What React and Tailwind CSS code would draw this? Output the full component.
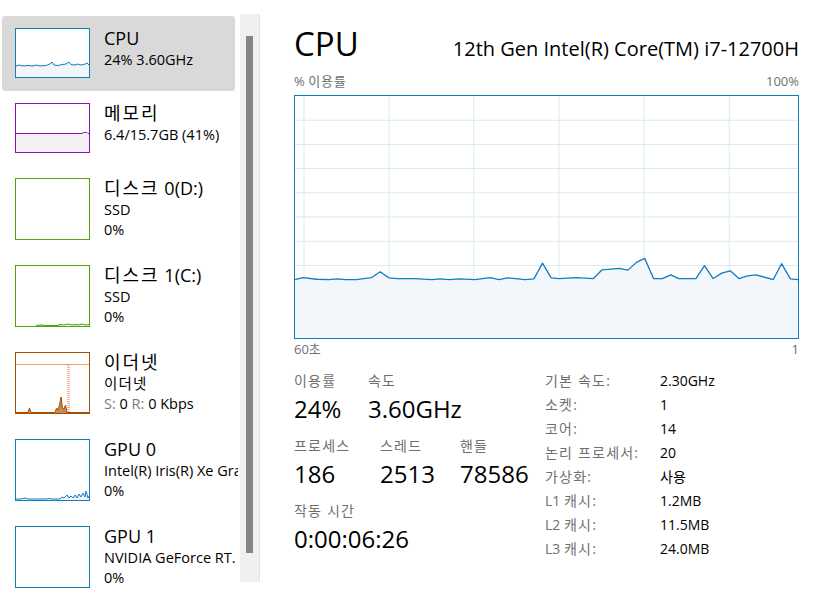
import React from "react";

const FONT = "font-['Open_Sans','Noto_Sans_CJK_KR',sans-serif]";

const chartPts = [
  [0, 182.8], [7.9, 180.8], [21.7, 182.5], [33.8, 182.8], [42.5, 182.1], [51.1, 182.8], [61.4, 182.8],
  [77, 180.8], [85.6, 175.1], [94.3, 181.1], [102.9, 181.8], [120.1, 181.8], [137.4, 182.8], [146, 182.1],
  [154.7, 182.8], [165, 182.1], [180.5, 182.8], [196.1, 180.8], [204.7, 182.8], [213.3, 181.1], [223.7, 182.1],
  [230.6, 182.8], [239.9, 182.1], [248.5, 166.4], [257.2, 181.1], [265.1, 181.8], [282.4, 180.8], [299.6, 181.8],
  [308.3, 173.1], [325.5, 171.7], [334.2, 173.4], [342.8, 165.7], [351.1, 161.7], [360, 181.8], [368.7, 181.8],
  [377.3, 178.1], [385.3, 181.8], [402.5, 181.8], [411.1, 169], [419.8, 181.8], [428.4, 176.4], [437, 174.1],
  [445.7, 181.8], [454.3, 179.1], [462.9, 178.1], [480.2, 182.8], [488.5, 167], [497.4, 182.1], [505, 182.8],
];

function MainChart() {
  const line = chartPts.map((p) => p.join(",")).join(" ");
  const area = `0,241 ${line} 505,241`;
  const vx = [9, 94.5, 179.5, 265, 350.5, 436];
  const hy = [1, 2, 3, 4, 5, 6, 7, 8, 9].map((k) => k * 24.1);
  return (
    <svg className="block w-full h-full" viewBox="0 0 505 241" preserveAspectRatio="none">
      {vx.map((x) => (
        <line key={"v" + x} x1={x} y1="0" x2={x} y2="241" stroke="#d9eaf4" strokeWidth="1" vectorEffect="non-scaling-stroke" />
      ))}
      {hy.map((y) => (
        <line key={"h" + y} x1="0" y1={y} x2="505" y2={y} stroke="#d9eaf4" strokeWidth="1" vectorEffect="non-scaling-stroke" />
      ))}
      <polygon points={area} fill="#f1f6fa" fillOpacity="0.85" />
      <polyline points={line} fill="none" stroke="#117dbb" strokeWidth="1.3" vectorEffect="non-scaling-stroke" strokeLinejoin="round" />
    </svg>
  );
}

function CpuThumb() {
  const pts = "0,37 3,36 7,37 12,36.5 17,37 20,36 24,37 30,36.5 34,35 36,33 38,36 42,36.5 46,35.5 50,35 53,33 55,35.5 58,36 62,35 64,36 68,35.5 71,34 73,36";
  return (
    <svg className="block w-full h-full" viewBox="0 0 73 48" preserveAspectRatio="none">
      <polygon points={`0,48 ${pts} 73,48`} fill="#f1f6fa" />
      <polyline points={pts} fill="none" stroke="#117dbb" strokeWidth="1" />
    </svg>
  );
}

function MemThumb() {
  const pts = "0,29.5 66,29.5 67.5,28.5 71,28.5 72,29.5 73,29.5";
  return (
    <svg className="block w-full h-full" viewBox="0 0 73 48" preserveAspectRatio="none">
      <polygon points={`0,48 ${pts} 73,48`} fill="#f4f1f5" />
      <polyline points={pts} fill="none" stroke="#8b12ae" strokeWidth="1" />
    </svg>
  );
}

function Disk1Thumb() {
  const pts = "20,59.5 26,59 30,59.5 42,59.5 44,58.5 48,59 52,58 56,59 60,58.5 63,59 66,58 70,59 73,58.5";
  return (
    <svg className="block w-full h-full" viewBox="0 0 73 60" preserveAspectRatio="none">
      <polyline points={pts} fill="none" stroke="#4da60c" strokeWidth="1.2" />
    </svg>
  );
}

function EthThumb() {
  const pts = "0,59.5 12,59.5 13.5,55 15,59.5 39,59.5 40.5,55 42,57 43.5,52 45,44 46.5,55 48,56 49.5,52 51,59.5 73,59.5";
  return (
    <svg className="block w-full h-full" viewBox="0 0 73 60" preserveAspectRatio="none">
      <line x1="0" y1="11.5" x2="73" y2="11.5" stroke="#e3a36a" strokeWidth="1" />
      <polygon points={`0,60 ${pts} 73,60`} fill="#c98a55" />
      <polyline points={pts} fill="none" stroke="#a74f01" strokeWidth="1" />
      <line x1="52" y1="12" x2="52" y2="59" stroke="#e8703a" strokeWidth="1" strokeDasharray="1 1" />
      <line x1="53.2" y1="14" x2="53.2" y2="59" stroke="#e8703a" strokeWidth="0.8" strokeDasharray="1 1" />
    </svg>
  );
}

function Gpu0Thumb() {
  const pts = "0,59 5,59 9,58 12,59 30,59 33,58.5 36,59 44,59 46,57 48,58 51,55 53,58 55,56 57,58 59,55 61,58 63,54 65,57 67,53 69,57 70,51 72,58 73,56";
  return (
    <svg className="block w-full h-full" viewBox="0 0 73 60" preserveAspectRatio="none">
      <polygon points={`0,60 ${pts} 73,60`} fill="#f1f6fa" />
      <polyline points={pts} fill="none" stroke="#117dbb" strokeWidth="1" />
    </svg>
  );
}

function SideItem({ selected, thumbClass, thumb, title, lines }) {
  return (
    <div className={`flex w-[233px] pl-[13px] pt-[12px] pb-[13px] rounded-[3px] ${selected ? "bg-[#d9d9d9]" : ""}`}>
      <div className={`w-[75px] shrink-0 border ${thumbClass} bg-white`}>{thumb}</div>
      <div className="ml-[14px] -mt-[2px] flex flex-col whitespace-nowrap text-black">
        <div className="text-[18px] leading-[24px]">{title}</div>
        {lines.map((l, i) => (
          <div key={i} className="text-[14.5px] leading-[20px]">
            {l}
          </div>
        ))}
      </div>
    </div>
  );
}

function Stat({ w, label, value }) {
  return (
    <div className={w}>
      <div className="text-[14px] leading-[24px] text-[#6f6f6f] tracking-[1.2px]">{label}</div>
      <div className="mt-[1px] text-[24px] leading-[30px] text-black">{value}</div>
    </div>
  );
}

const K = ({ children }) => <span className="tracking-[2px]">{children}</span>;
const Ks = ({ children }) => <span className="tracking-[1.2px]">{children}</span>;

export default function App() {
  const info = [
    [<Ks>기본 속도</Ks>, "2.30GHz"],
    [<Ks>소켓</Ks>, "1"],
    [<Ks>코어</Ks>, "14"],
    [<Ks>논리 프로세서</Ks>, "20"],
    [<Ks>가상화</Ks>, "사용"],
    [<>L1 <Ks>캐시</Ks></>, "1.2MB"],
    [<>L2 <Ks>캐시</Ks></>, "11.5MB"],
    [<>L3 <Ks>캐시</Ks></>, "24.0MB"],
  ];
  return (
    <div className={`w-[820px] h-[595px] overflow-hidden bg-white flex ${FONT}`}>
      <div className="w-[238px] shrink-0 overflow-hidden pt-[16px] pl-[2px] flex flex-col">
        <SideItem selected thumbClass="h-[50px] border-[#117dbb]" thumb={<CpuThumb />} title="CPU" lines={["24% 3.60GHz"]} />
        <SideItem thumbClass="h-[50px] border-[#8b12ae]" thumb={<MemThumb />} title={<K>메모리</K>} lines={["6.4/15.7GB (41%)"]} />
        <SideItem thumbClass="h-[62px] border-[#4da60c]" thumb={null} title={<><K>디스크</K> 0(D:)</>} lines={["SSD", "0%"]} />
        <SideItem thumbClass="h-[62px] border-[#4da60c]" thumb={<Disk1Thumb />} title={<><K>디스크</K> 1(C:)</>} lines={["SSD", "0%"]} />
        <SideItem
          thumbClass="h-[62px] border-[#a74f01]"
          thumb={<EthThumb />}
          title={<K>이더넷</K>}
          lines={[
            <Ks key="a">이더넷</Ks>,
            <span key="e">
              <span className="text-[#7a7a7a]">S:</span> 0 <span className="text-[#7a7a7a]">R:</span> 0 Kbps
            </span>,
          ]}
        />
        <SideItem thumbClass="h-[62px] border-[#117dbb]" thumb={<Gpu0Thumb />} title="GPU 0" lines={["Intel(R) Iris(R) Xe Graphics", "0%"]} />
        <SideItem thumbClass="h-[62px] border-[#117dbb]" thumb={null} title="GPU 1" lines={["NVIDIA GeForce RT.", "0%"]} />
      </div>
      <div className="ml-[2px] w-[20px] shrink-0 mt-[14px] h-[568px] bg-[#f0f0f0] border-r border-[#e2e2e2] flex flex-col">
        <div className="mt-[22px] ml-[6px] w-[7px] h-[517px] bg-[#858585]" />
      </div>
      <div className="flex-1 pl-[34px] pr-[21px] pt-[24px] text-black">
        <div className="flex items-baseline justify-between h-[40px]">
          <span className="text-[33px] leading-[40px]">CPU</span>
          <span className="text-[20px] leading-[40px]">12th Gen Intel(R) Core(TM) i7-12700H</span>
        </div>
        <div className="mt-[9px] flex justify-between text-[13px] leading-[16px] text-[#707070]">
          <span>
            % <span className="tracking-[0.8px]">이용률</span>
          </span>
          <span>100%</span>
        </div>
        <div className="mt-[6px] w-[505px] h-[244px] border border-[#117dbb]">
          <MainChart />
        </div>
        <div className="mt-[2px] flex justify-between text-[13px] leading-[16px] text-[#707070]">
          <span>60초</span>
          <span>1</span>
        </div>
        <div className="mt-[12px] flex">
          <div className="w-[251px] shrink-0 flex flex-col">
            <div className="flex">
              <Stat w="w-[74px]" label="이용률" value="24%" />
              <Stat w="" label="속도" value="3.60GHz" />
            </div>
            <div className="flex mt-[10px]">
              <Stat w="w-[86px]" label="프로세스" value="186" />
              <Stat w="w-[80px]" label="스레드" value="2513" />
              <Stat w="" label="핸들" value="78586" />
            </div>
            <div className="flex mt-[10px]">
              <Stat w="" label="작동 시간" value="0:00:06:26" />
            </div>
          </div>
          <div className="grid grid-cols-[115px_auto] text-[14px] leading-[24px]">
            {info.map(([k, v], i) => (
              <React.Fragment key={i}>
                <div className="text-[#6f6f6f]">{k}:</div>
                <div className="text-black">{v}</div>
              </React.Fragment>
            ))}
          </div>
        </div>
      </div>
    </div>
  );
}
